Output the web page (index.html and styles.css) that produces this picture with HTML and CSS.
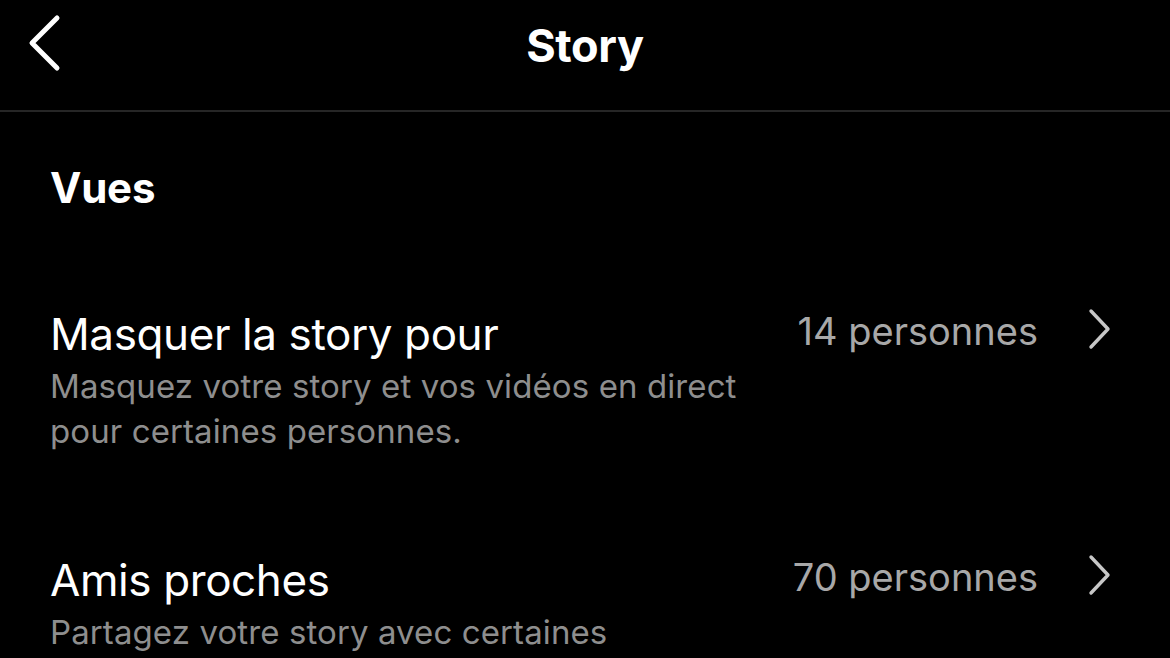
FILE: index.html
```html
<!DOCTYPE html>
<html lang="fr">
<head>
<meta charset="utf-8">
<title>Story</title>
<link rel="stylesheet" href="styles.css">
</head>
<body>
<div class="screen">
  <header class="nav">
    <button class="back" aria-label="Retour">
      <svg viewBox="0 0 40 60" width="40" height="60"><path d="M33 5 L8 30 L33 55" fill="none" stroke="#fff" stroke-width="5" stroke-linecap="round" stroke-linejoin="round"/></svg>
    </button>
    <h1 class="title">Story</h1>
  </header>
  <section class="section">
    <h2 class="section-title">Vues</h2>
    <div class="row">
      <div class="row-text">
        <div class="row-label">Masquer la story pour</div>
        <div class="row-desc">Masquez votre story et vos vidéos en direct<br>pour certaines personnes.</div>
      </div>
      <div class="row-value">14 personnes</div>
      <svg class="chev" viewBox="0 0 24 42" width="24" height="42"><path d="M3 3 L20 21 L3 39" fill="none" stroke="#c7c7c7" stroke-width="3.4" stroke-linecap="round" stroke-linejoin="round"/></svg>
    </div>
    <div class="row">
      <div class="row-text">
        <div class="row-label">Amis proches</div>
        <div class="row-desc">Partagez votre story avec certaines<br>personnes.</div>
      </div>
      <div class="row-value">70 personnes</div>
      <svg class="chev" viewBox="0 0 24 42" width="24" height="42"><path d="M3 3 L20 21 L3 39" fill="none" stroke="#c7c7c7" stroke-width="3.4" stroke-linecap="round" stroke-linejoin="round"/></svg>
    </div>
  </section>
</div>
</body>
</html>
```
FILE: styles.css
```css
html, body {
  margin: 0;
  padding: 0;
  background: #000;
}
body {
  font-family: Inter, "Noto Sans", sans-serif;
  color: #fff;
  width: 1170px;
  height: 658px;
  overflow: hidden;
}
.screen {
  display: flex;
  flex-direction: column;
}
.nav {
  position: relative;
  height: 91px;
  padding-top: 19px;
  border-bottom: 2px solid #262626;
  display: flex;
  align-items: flex-start;
  justify-content: center;
}
.back {
  position: absolute;
  left: 24px;
  top: 13px;
  background: none;
  border: 0;
  padding: 0;
  line-height: 0;
}
.title {
  margin: 0;
  font-size: 45px;
  line-height: 54px;
  font-weight: 700;
  letter-spacing: -0.3px;
}
.section {
  padding: 0 50px;
}
.section-title {
  margin: 52px 0 0;
  font-size: 42px;
  font-weight: 700;
  line-height: 48px;
  letter-spacing: -0.2px;
}
.row {
  display: flex;
  align-items: flex-start;
  margin-top: 96px;
}
.row + .row {
  margin-top: 100px;
}
.row-text {
  flex: 1;
}
.row-label {
  font-size: 44px;
  line-height: 52px;
  letter-spacing: -0.4px;
}
.row-desc {
  margin-top: 4px;
  font-size: 33px;
  line-height: 45px;
  color: #8e8e8e;
  letter-spacing: 0.1px;
}
.row-value {
  margin-top: -3px;
  font-size: 38px;
  line-height: 52px;
  color: #a8a8a8;
  margin-right: 50px;
}
.chev {
  flex: none;
  margin-top: 0;
  margin-right: 8px;
}
```
